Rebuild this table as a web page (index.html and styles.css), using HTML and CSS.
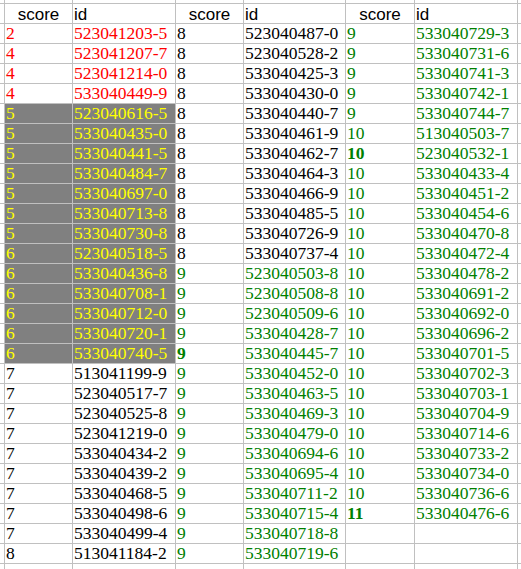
FILE: index.html
```html
<!DOCTYPE html>
<html>
<head>
<meta charset="utf-8">
<link rel="stylesheet" href="styles.css">
</head>
<body>
<div class="sheet">
<div class="c"></div><div class="c"></div><div class="c"></div><div class="c"></div><div class="c"></div><div class="c"></div><div class="c"></div><div class="c"></div>
<div class="c"></div><div class="c hd ctr">score</div><div class="c hd">id</div><div class="c hd ctr">score</div><div class="c hd">id</div><div class="c hd ctr">score</div><div class="c hd">id</div><div class="c"></div>

<div class="c"></div><div class="c r">2</div><div class="c r">523041203-5</div><div class="c">8</div><div class="c">523040487-0</div><div class="c g">9</div><div class="c g">533040729-3</div><div class="c"></div>
<div class="c"></div><div class="c r">4</div><div class="c r">523041207-7</div><div class="c">8</div><div class="c">523040528-2</div><div class="c g">9</div><div class="c g">533040731-6</div><div class="c"></div>
<div class="c"></div><div class="c r">4</div><div class="c r">523041214-0</div><div class="c">8</div><div class="c">533040425-3</div><div class="c g">9</div><div class="c g">533040741-3</div><div class="c"></div>
<div class="c"></div><div class="c r">4</div><div class="c r">533040449-9</div><div class="c">8</div><div class="c">533040430-0</div><div class="c g">9</div><div class="c g">533040742-1</div><div class="c"></div>
<div class="c"></div><div class="c h">5</div><div class="c h">523040616-5</div><div class="c">8</div><div class="c">533040440-7</div><div class="c g">9</div><div class="c g">533040744-7</div><div class="c"></div>
<div class="c"></div><div class="c h">5</div><div class="c h">533040435-0</div><div class="c">8</div><div class="c">533040461-9</div><div class="c g">10</div><div class="c g">513040503-7</div><div class="c"></div>
<div class="c"></div><div class="c h">5</div><div class="c h">533040441-5</div><div class="c">8</div><div class="c">533040462-7</div><div class="c g b">10</div><div class="c g">523040532-1</div><div class="c"></div>
<div class="c"></div><div class="c h">5</div><div class="c h">533040484-7</div><div class="c">8</div><div class="c">533040464-3</div><div class="c g">10</div><div class="c g">533040433-4</div><div class="c"></div>
<div class="c"></div><div class="c h">5</div><div class="c h">533040697-0</div><div class="c">8</div><div class="c">533040466-9</div><div class="c g">10</div><div class="c g">533040451-2</div><div class="c"></div>
<div class="c"></div><div class="c h">5</div><div class="c h">533040713-8</div><div class="c">8</div><div class="c">533040485-5</div><div class="c g">10</div><div class="c g">533040454-6</div><div class="c"></div>
<div class="c"></div><div class="c h">5</div><div class="c h">533040730-8</div><div class="c">8</div><div class="c">533040726-9</div><div class="c g">10</div><div class="c g">533040470-8</div><div class="c"></div>
<div class="c"></div><div class="c h">6</div><div class="c h">523040518-5</div><div class="c">8</div><div class="c">533040737-4</div><div class="c g">10</div><div class="c g">533040472-4</div><div class="c"></div>
<div class="c"></div><div class="c h">6</div><div class="c h">533040436-8</div><div class="c g">9</div><div class="c g">523040503-8</div><div class="c g">10</div><div class="c g">533040478-2</div><div class="c"></div>
<div class="c"></div><div class="c h">6</div><div class="c h">533040708-1</div><div class="c g">9</div><div class="c g">523040508-8</div><div class="c g">10</div><div class="c g">533040691-2</div><div class="c"></div>
<div class="c"></div><div class="c h">6</div><div class="c h">533040712-0</div><div class="c g">9</div><div class="c g">523040509-6</div><div class="c g">10</div><div class="c g">533040692-0</div><div class="c"></div>
<div class="c"></div><div class="c h">6</div><div class="c h">533040720-1</div><div class="c g">9</div><div class="c g">533040428-7</div><div class="c g">10</div><div class="c g">533040696-2</div><div class="c"></div>
<div class="c"></div><div class="c h">6</div><div class="c h">533040740-5</div><div class="c g b">9</div><div class="c g">533040445-7</div><div class="c g">10</div><div class="c g">533040701-5</div><div class="c"></div>
<div class="c"></div><div class="c">7</div><div class="c">513041199-9</div><div class="c g">9</div><div class="c g">533040452-0</div><div class="c g">10</div><div class="c g">533040702-3</div><div class="c"></div>
<div class="c"></div><div class="c">7</div><div class="c">523040517-7</div><div class="c g">9</div><div class="c g">533040463-5</div><div class="c g">10</div><div class="c g">533040703-1</div><div class="c"></div>
<div class="c"></div><div class="c">7</div><div class="c">523040525-8</div><div class="c g">9</div><div class="c g">533040469-3</div><div class="c g">10</div><div class="c g">533040704-9</div><div class="c"></div>
<div class="c"></div><div class="c">7</div><div class="c">523041219-0</div><div class="c g">9</div><div class="c g">533040479-0</div><div class="c g">10</div><div class="c g">533040714-6</div><div class="c"></div>
<div class="c"></div><div class="c">7</div><div class="c">533040434-2</div><div class="c g">9</div><div class="c g">533040694-6</div><div class="c g">10</div><div class="c g">533040733-2</div><div class="c"></div>
<div class="c"></div><div class="c">7</div><div class="c">533040439-2</div><div class="c g">9</div><div class="c g">533040695-4</div><div class="c g">10</div><div class="c g">533040734-0</div><div class="c"></div>
<div class="c"></div><div class="c">7</div><div class="c">533040468-5</div><div class="c g">9</div><div class="c g">533040711-2</div><div class="c g">10</div><div class="c g">533040736-6</div><div class="c"></div>
<div class="c"></div><div class="c">7</div><div class="c">533040498-6</div><div class="c g">9</div><div class="c g">533040715-4</div><div class="c g b">11</div><div class="c g">533040476-6</div><div class="c"></div>
<div class="c"></div><div class="c">7</div><div class="c">533040499-4</div><div class="c g">9</div><div class="c g">533040718-8</div><div class="c"></div><div class="c"></div><div class="c"></div>
<div class="c"></div><div class="c">8</div><div class="c">513041184-2</div><div class="c g">9</div><div class="c g">533040719-6</div><div class="c"></div><div class="c"></div><div class="c"></div>

<div class="c"></div><div class="c"></div><div class="c"></div><div class="c"></div><div class="c"></div><div class="c"></div><div class="c"></div><div class="c"></div>
</div>
</body>
</html>
```

FILE: styles.css
```css
html, body {
  margin: 0;
  padding: 0;
  background: #ffffff;
  overflow: hidden;
}

.sheet {
  display: grid;
  grid-template-columns: 4px 67px 102px 67px 101px 68px 102px 20px;
  grid-template-rows: 3px repeat(28, 19px) 20px;
  gap: 1px;
  background: #c0c0c0;
  width: max-content;
}

.c {
  background: #ffffff;
  color: #000000;
  font-family: "Liberation Serif", "Times New Roman", serif;
  font-size: 17.5px;
  line-height: 19px;
  padding-left: 1px;
  white-space: nowrap;
  overflow: hidden;
}

.hd {
  font-family: "Liberation Sans", Arial, sans-serif;
  font-size: 17px;
  padding-top: 1px;
  height: 18px;
}

.ctr {
  text-align: center;
  padding-left: 0;
}

.r { color: #ff0000; }
.g { color: #008000; }
.b { font-weight: bold; }

.h {
  background: #808080;
  color: #ffff00;
}
```
